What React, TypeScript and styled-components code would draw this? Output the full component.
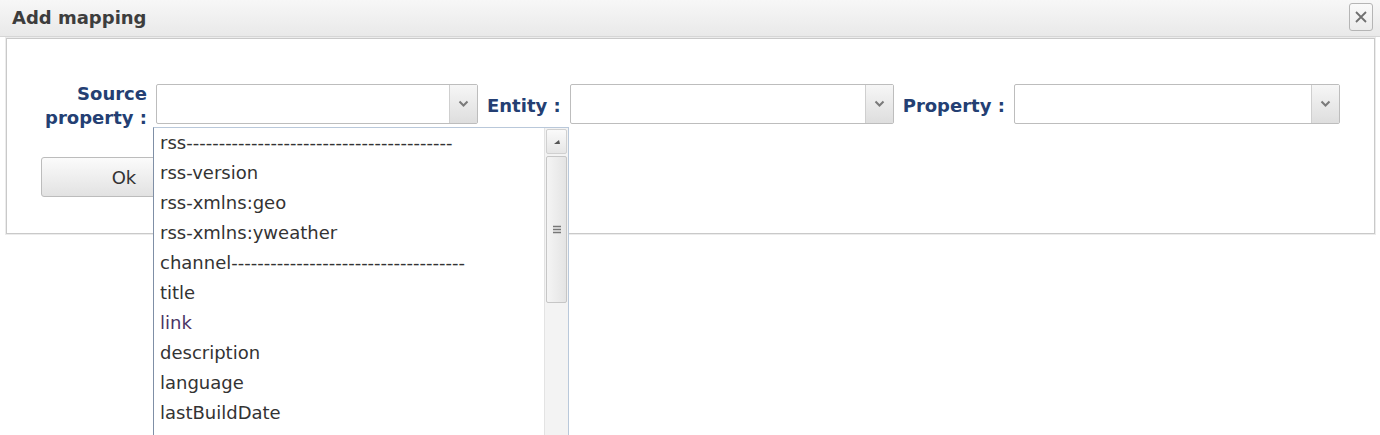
import styled, { createGlobalStyle } from 'styled-components';

const GlobalStyle = createGlobalStyle`
  html, body {
    margin: 0;
    padding: 0;
    background: #ffffff;
  }
  body {
    font-family: 'DejaVu Sans', Verdana, sans-serif;
  }
`;

const Dialog = styled.div`
  position: relative;
  width: 1380px;
  height: 435px;
  overflow: hidden;
  background: #fff;
`;

const TitleBar = styled.div`
  display: flex;
  align-items: center;
  justify-content: space-between;
  height: 37px;
  padding: 0 7px 0 12px;
  box-sizing: border-box;
  background: linear-gradient(#f7f7f7, #e9e9e9);
  border-bottom: 1px solid #d6d6d6;
`;

const Title = styled.div`
  font-size: 18px;
  font-weight: 700;
  color: #3d3d3d;
  margin-top: -2px;
`;

const CloseButton = styled.div`
  display: flex;
  align-items: center;
  justify-content: center;
  width: 22px;
  height: 26px;
  margin-top: -3px;
  border: 1px solid #b5b5b5;
  border-radius: 3px;
  background: linear-gradient(#fafafa, #ececec);
  color: #707070;
`;

const Body = styled.div`
  margin: 1px 5px 0 6px;
  height: 196px;
  border: 1px solid #c9c9c9;
  box-shadow: 0 0 0 1px #ececec;
  box-sizing: border-box;
  background: #fff;
  padding-top: 39px;
`;

const FormRow = styled.div`
  display: flex;
  align-items: center;
  gap: 9px;
`;

const Label = styled.div<{ $width?: number }>`
  width: ${(p) => (p.$width ? `${p.$width}px` : 'auto')};
  padding-top: 4px;
  font-size: 18px;
  font-weight: 700;
  line-height: 24px;
  color: #243f73;
  text-align: right;
  white-space: pre-line;
`;

const Select = styled.div<{ $width: number }>`
  display: flex;
  width: ${(p) => p.$width}px;
  height: 40px;
  box-sizing: border-box;
  border: 1px solid #bdbdbd;
  border-radius: 2px;
  background: #fff;
`;

const SelectField = styled.div`
  flex: 1;
`;

const SelectArrow = styled.div`
  display: flex;
  align-items: center;
  justify-content: center;
  width: 27px;
  border-left: 1px solid #cfcfcf;
  background: linear-gradient(#f6f6f6, #dedede);
  color: #7a7a7a;
`;

const OkButton = styled.div`
  display: flex;
  align-items: center;
  justify-content: center;
  width: 166px;
  height: 40px;
  margin: 27px 0 0 34px;
  box-sizing: border-box;
  border: 1px solid #bcbcbc;
  border-radius: 3px;
  background: linear-gradient(#fbfbfb, #e2e2e2);
  font-size: 18px;
  color: #333;
`;

const DropList = styled.div`
  position: absolute;
  left: 153px;
  top: 127px;
  width: 416px;
  height: 320px;
  display: flex;
  box-sizing: border-box;
  border: 1px solid #b9c8da;
  border-left-color: #7f8fa6;
  background: #fff;
`;

const Options = styled.div`
  flex: 1;
`;

const Option = styled.div<{ $color?: string }>`
  height: 30px;
  line-height: 30px;
  padding-left: 6px;
  font-size: 18px;
  color: ${(p) => p.$color || '#333333'};
  white-space: nowrap;
`;

const ScrollBar = styled.div`
  display: flex;
  flex-direction: column;
  width: 24px;
  padding: 1px 0;
  box-sizing: border-box;
  border-left: 1px solid #e3e3e3;
  background: #f3f3f3;
`;

const ScrollButton = styled.div`
  display: flex;
  align-items: center;
  justify-content: center;
  height: 23px;
  margin: 0 1px;
  border: 1px solid #d0d0d0;
  border-radius: 2px;
  background: linear-gradient(#fafafa, #e6e6e6);
`;

const Thumb = styled.div`
  display: flex;
  align-items: center;
  justify-content: center;
  height: 145px;
  margin: 2px 1px 0;
  border: 1px solid #c6c6c6;
  border-radius: 2px;
  background: linear-gradient(90deg, #f4f4f4, #e4e4e4);
`;

const Chevron = () => (
  <svg width="11" height="8" viewBox="0 0 11 8">
    <polyline points="1.5,1.5 5.5,5.5 9.5,1.5" fill="none" stroke="currentColor" strokeWidth="2" />
  </svg>
);

const dashes = (n: number) => '-'.repeat(n);

const options: { text: string; color?: string }[] = [
  { text: 'rss' + dashes(41) },
  { text: 'rss-version' },
  { text: 'rss-xmlns:geo' },
  { text: 'rss-xmlns:yweather' },
  { text: 'channel' + dashes(36) },
  { text: 'title' },
  { text: 'link', color: '#4b3566' },
  { text: 'description' },
  { text: 'language' },
  { text: 'lastBuildDate' },
];

const App = () => {
  return (
    <>
      <GlobalStyle />
      <Dialog>
        <TitleBar>
          <Title>Add mapping</Title>
          <CloseButton>
            <svg width="14" height="14" viewBox="0 0 14 14">
              <path d="M2 2 L12 12 M12 2 L2 12" stroke="currentColor" strokeWidth="1.8" />
            </svg>
          </CloseButton>
        </TitleBar>
        <Body>
          <FormRow>
            <Label $width={140}>{'Source\nproperty :'}</Label>
            <Select $width={322}>
              <SelectField />
              <SelectArrow>
                <Chevron />
              </SelectArrow>
            </Select>
            <Label>Entity :</Label>
            <Select $width={324}>
              <SelectField />
              <SelectArrow>
                <Chevron />
              </SelectArrow>
            </Select>
            <Label>Property :</Label>
            <Select $width={326}>
              <SelectField />
              <SelectArrow>
                <Chevron />
              </SelectArrow>
            </Select>
          </FormRow>
          <OkButton>Ok</OkButton>
        </Body>
        <DropList>
          <Options>
            {options.map((o) => (
              <Option key={o.text} $color={o.color}>
                {o.text}
              </Option>
            ))}
          </Options>
          <ScrollBar>
            <ScrollButton>
              <svg width="8" height="6" viewBox="0 0 8 6">
                <polygon points="1,5 6,1 7,5" fill="#555" />
              </svg>
            </ScrollButton>
            <Thumb>
              <svg width="8" height="9" viewBox="0 0 8 9">
                <path d="M0 1.5 H8 M0 4.5 H8 M0 7.5 H8" stroke="#777" strokeWidth="1.4" />
              </svg>
            </Thumb>
          </ScrollBar>
        </DropList>
      </Dialog>
    </>
  );
};

export default App;
